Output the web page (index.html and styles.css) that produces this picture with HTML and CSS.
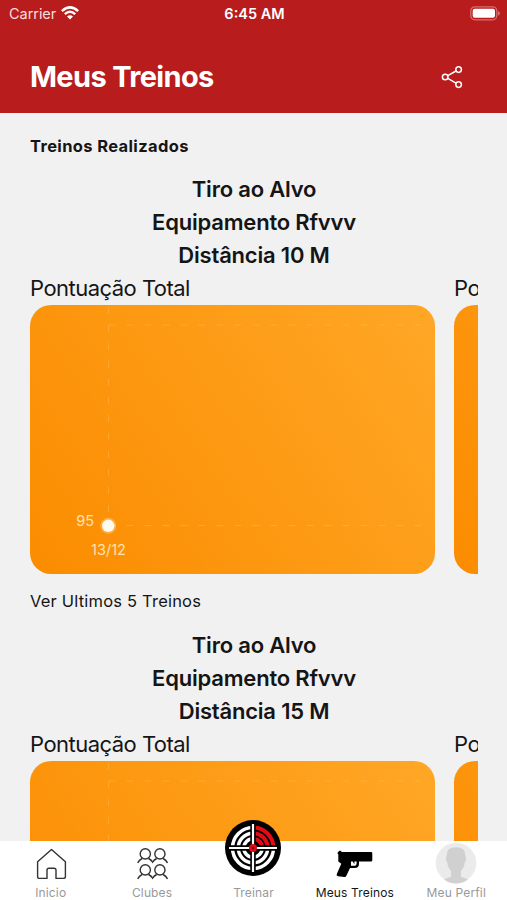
FILE: index.html
```html
<!DOCTYPE html>
<html lang="pt">
<head>
<meta charset="utf-8">
<title>Meus Treinos</title>
<link rel="stylesheet" href="styles.css">
</head>
<body>
<div class="app">
  <header class="header">
    <div class="status">
      <div class="carrier"><span>Carrier</span>
        <svg width="18" height="14" viewBox="0 0 18 14" fill="none" stroke="#fff" stroke-width="2.5"><path d="M.9 5.2Q9-2.4 17.1 5.2M3.8 8.1Q9 3.4 14.2 8.1"/><path d="M9 13.5 6 10.4Q9 8 12 10.4Z" fill="#fff" stroke="none"/></svg>
      </div>
      <span class="time">6:45 AM</span>
      <svg class="battery" width="30" height="15" viewBox="0 0 30 15"><rect x=".8" y=".8" width="26" height="13" rx="4" fill="none" stroke="#d66e6e" stroke-width="1.3"/><rect x="2.7" y="2.8" width="22.3" height="9" rx="2" fill="#fff"/><path d="M28 5v4.8q2-1 2-2.4t-2-2.4" fill="#d66e6e"/></svg>
    </div>
    <div class="titlebar">
      <h1>Meus Treinos</h1>
      <svg width="22" height="24" viewBox="0 0 22 24" fill="none" stroke="#fff" stroke-width="1.5"><circle cx="4.2" cy="12" r="2.8"/><circle cx="17.6" cy="4.6" r="2.8"/><circle cx="17.6" cy="19.6" r="2.8"/><path d="M6.8 10.6 15 6M6.8 13.4l8.2 4.7"/></svg>
    </div>
  </header>

  <main class="content">
    <h2>Treinos Realizados</h2>
    <section class="training">
      <div class="info"><p class="activity">Tiro ao Alvo</p><p class="equipment">Equipamento Rfvvv</p><p class="distance">Distância 10 M</p></div>
      <div class="slides">
        <article class="slide">
          <h3>Pontuação Total</h3>
          <svg class="chart" width="405" height="269" viewBox="0 0 405 269"><path class="grid" d="M78.5 20H398M78.5 220.5H398M78.5 2V220.5"/><circle cx="78.3" cy="220.8" r="8" fill="#fff" opacity=".25"/><circle cx="78.3" cy="220.8" r="6.2" fill="#fffaf0"/><text x="64" y="221" text-anchor="end">95</text><text x="78.5" y="250" text-anchor="middle">13/12</text></svg>
        </article>
        <article class="slide"><h3>Pontuação Total</h3><div class="chart"></div></article>
      </div>
      <p class="more">Ver Ultimos 5 Treinos</p>
    </section>
    <section class="training">
      <div class="info"><p class="activity">Tiro ao Alvo</p><p class="equipment">Equipamento Rfvvv</p><p class="distance">Distância 15 M</p></div>
      <div class="slides">
        <article class="slide">
          <h3>Pontuação Total</h3>
          <svg class="chart" width="405" height="269" viewBox="0 0 405 269"><path class="grid" d="M78.5 20H398M78.5 220.5H398M78.5 2V220.5"/></svg>
        </article>
        <article class="slide"><h3>Pontuação Total</h3><div class="chart"></div></article>
      </div>
    </section>
  </main>

  <nav class="tabs">
    <div class="tab">
      <svg width="32" height="34" viewBox="0 0 32 34" fill="none" stroke="#333" stroke-width="1.4" stroke-linejoin="round"><path d="M16.5 2.4 30.4 14.8V29.4q0 2-2 2h-7.4V23.2q0-2-2-2h-5q-2 0-2 2v8.2H4.6q-2 0-2-2V14.8Z"/></svg>
      <span class="label inicio">Inicio</span>
    </div>
    <div class="tab">
      <svg width="32" height="34" viewBox="0 0 32 34" fill="none" stroke="#333" stroke-width="1.4"><g id="pair"><circle cx="9.3" cy="6.9" r="5.1"/><circle cx="23.9" cy="6.9" r="5.1"/><path d="M1.7 15.9q1.5-3 4.4-4.4M12.5 11.5q2.6 1.2 4.1 3.6 1.5-2.4 4.1-3.6M27.1 11.5q2.9 1.4 4.4 4.4"/></g><use href="#pair" y="16"/></svg>
      <span class="label clubes">Clubes</span>
    </div>
    <div class="tab">
      <svg class="target" width="58" height="58" viewBox="-29 -29 58 58">
        <circle r="28" fill="#000"/>
        <g fill="none" stroke="#fff" stroke-width="3.5"><circle r="20.5"/><circle r="14.7"/><circle r="9.2"/></g>
        <path d="M0 0V-24A24 24 0 0 1 24 0Z" fill="#000"/>
        <g fill="none" stroke="#e30b16" stroke-width="4"><path d="M0-20.5A20.5 20.5 0 0 1 20.5 0M0-14.7A14.7 14.7 0 0 1 14.7 0M0-9.2A9.2 9.2 0 0 1 9.2 0"/></g>
        <path d="M0-25V25M-25 0H25" stroke="#000" stroke-width="5.5"/>
        <path d="M0-24V24M-24 0H24" stroke="#fff" stroke-width="2.2"/>
        <circle r="4" fill="#e30b16"/><circle r="1.2" fill="#600"/>
      </svg>
      <span class="label treinar">Treinar</span>
    </div>
    <div class="tab active">
      <svg class="pistol" width="38" height="34" viewBox="0 0 38 34"><path d="M3 5 5 3.5 7 5H36q1.3 0 1.3 1.3v6.9q0 1.2-1.2 1.2H24v2.4q0 4.3-4.3 4.3h-4.7L11.5 28.5q-.5 1.7-2.3 1.5L3 29.2q-2-.4-1.2-2.3L6.3 16.8 3.3 14.5V7.5L2.5 6.5Z"/><path d="M16 14.6v4.1h3.5q2.1 0 2.1-2.2v-1.9h-2.2v2.7L17.7 14.6Z" fill="#fff"/></svg>
      <span class="label treinos">Meus Treinos</span>
    </div>
    <div class="tab">
      <svg width="42" height="42" viewBox="0 0 42 42"><circle cx="21" cy="21" r="20.3" fill="#ebebeb"/><path d="M9 37.6q3-1.8 7-2.7V29q-3.2-3-3.7-8.5-2.2-3.3-.8-6Q11 5.2 21 5.2t9.5 9.3q1.4 2.7-.8 6Q29.2 26 26 29v5.9q4 .9 7 2.7-5.3 3.9-12 3.9T9 37.6Z" fill="#d0d0d0"/></svg>
      <span class="label perfil">Meu Perfil</span>
    </div>
  </nav>
</div>
</body>
</html>
```

FILE: styles.css
```css
* { box-sizing: border-box; }
body { margin: 0; font-family: Inter, "Liberation Sans", sans-serif; color: #151515; }
h1, h2, h3, p { margin: 0; }
svg { display: block; flex: none; }
.app { width: 507px; height: 900px; display: flex; flex-direction: column; background: #f1f1f1; overflow: hidden; }
.header { flex: none; height: 113px; background: #b81c1c; color: #fff; }
.status { height: 28px; padding: 0 7px 0 9px; display: grid; grid-template-columns: 1fr auto 1fr; align-items: center; font-size: 14.5px; }
.carrier { display: flex; align-items: center; gap: 5px; color: #f8dede; letter-spacing: -.05px; }
.carrier span, .time { position: relative; top: -1px; }
.carrier svg { margin-top: -2px; }
.time { font-weight: 600; font-size: 14.5px; }
.battery { justify-self: end; margin-top: -2px; }
.titlebar { height: 85px; padding: 13px 44px 0 30px; display: flex; justify-content: space-between; align-items: center; }
h1 { font-size: 29px; line-height: 36px; font-weight: 700; letter-spacing: -.65px; white-space: nowrap; }
.content { flex: 1; min-height: 0; overflow: hidden; padding: 21px 29px 0 30px; }
h2 { font-size: 16.5px; line-height: 24px; font-weight: 650; letter-spacing: .37px; }
h2 + .training { margin-top: 15px; }
.training { height: 456px; }
.info { text-align: center; font-size: 22px; line-height: 33px; font-weight: 600; letter-spacing: -.2px; }
.slides { display: flex; gap: 19px; overflow: hidden; }
.slide { flex: none; width: 405px; }
h3 { font-size: 22px; line-height: 33px; font-weight: 400; letter-spacing: -.53px; white-space: nowrap; }
.chart { display: block; width: 405px; height: 269px; border-radius: 21px; background: linear-gradient(56deg, #fb8c00, #ffa726); }
.grid { fill: none; stroke: #ffc56c; stroke-width: 1; stroke-dasharray: 7 11; opacity: .35; }
.chart text { font-size: 14.5px; fill: #ffe1b4; }
.more { font-size: 16.5px; line-height: 24px; margin-top: 15px; letter-spacing: .2px; }
.tabs { flex: none; height: 59px; background: #fff; display: grid; grid-template-columns: repeat(5, 1fr); }
.tab { height: 59px; display: flex; flex-direction: column; align-items: center; justify-content: flex-end; color: #999; }
.label { font-size: 12px; line-height: 15px; letter-spacing: .15px; white-space: nowrap; }
.active { color: #151515; }
.tab svg { margin-bottom: 4px; }
.tab .target { margin-bottom: 8px; }
.tab .pistol { margin-right: 2px; }
.tab:last-child svg { margin-bottom: 1px; }
```
